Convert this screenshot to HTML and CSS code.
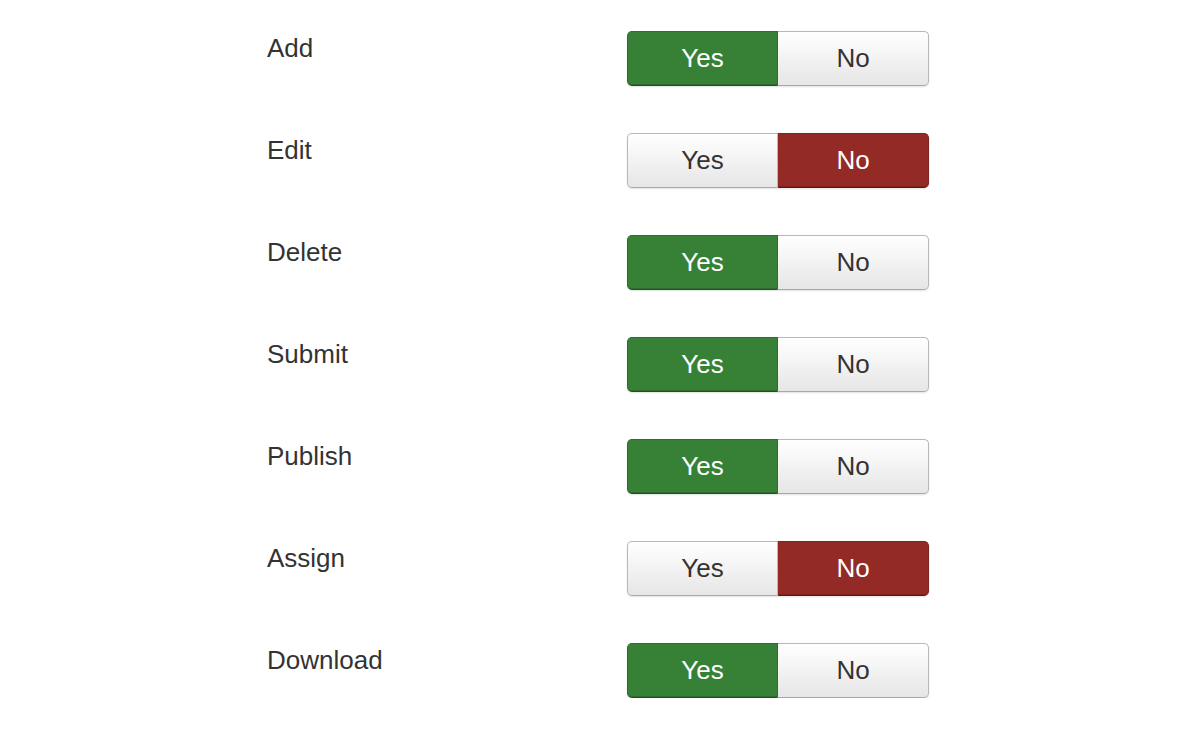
FILE: index.html
```html
<!DOCTYPE html>
<html lang="en">

<head>
    <meta charset="UTF-8">
    <meta name="viewport" content="width=device-width, initial-scale=1.0">
    <title>Permissions</title>
    <link rel="stylesheet" href="styles.css">
</head>

<body>
    <div class="options">
        <div class="option-row">
            <label class="option-label">Add</label>
            <div class="btn-group">
                <button class="btn active-yes">Yes</button>
                <button class="btn">No</button>
            </div>
        </div>
        <div class="option-row">
            <label class="option-label">Edit</label>
            <div class="btn-group">
                <button class="btn">Yes</button>
                <button class="btn active-no">No</button>
            </div>
        </div>
        <div class="option-row">
            <label class="option-label">Delete</label>
            <div class="btn-group">
                <button class="btn active-yes">Yes</button>
                <button class="btn">No</button>
            </div>
        </div>
        <div class="option-row">
            <label class="option-label">Submit</label>
            <div class="btn-group">
                <button class="btn active-yes">Yes</button>
                <button class="btn">No</button>
            </div>
        </div>
        <div class="option-row">
            <label class="option-label">Publish</label>
            <div class="btn-group">
                <button class="btn active-yes">Yes</button>
                <button class="btn">No</button>
            </div>
        </div>
        <div class="option-row">
            <label class="option-label">Assign</label>
            <div class="btn-group">
                <button class="btn">Yes</button>
                <button class="btn active-no">No</button>
            </div>
        </div>
        <div class="option-row">
            <label class="option-label">Download</label>
            <div class="btn-group">
                <button class="btn active-yes">Yes</button>
                <button class="btn">No</button>
            </div>
        </div>
    </div>
</body>

</html>
```

FILE: styles.css
```css
body {
    margin: 0;
    background-color: #fff;
    font-family: "Liberation Sans", Arial, sans-serif;
    color: #333;
}

.options {
    padding: 31px 0 0 267px;
    display: flex;
    flex-direction: column;
    gap: 47px;
}

.option-row {
    display: flex;
    align-items: flex-start;
}

.option-label {
    width: 360px;
    font-size: 26px;
    line-height: 34px;
}

.btn-group {
    display: flex;
    border-radius: 5px;
    box-shadow: 0 1px 2px rgba(0, 0, 0, 0.12);
}

.btn {
    width: 151px;
    height: 55px;
    font-family: inherit;
    font-size: 26px;
    color: #333;
    background: linear-gradient(to bottom, #ffffff, #e6e6e6);
    border: 1px solid #b8b8b8;
    border-bottom-color: #a8a8a8;
    box-shadow: inset 0 1px 0 rgba(255, 255, 255, 0.3);
    padding: 0;
    cursor: pointer;
}

.btn:first-child {
    border-radius: 5px 0 0 5px;
}

.btn:last-child {
    border-radius: 0 5px 5px 0;
    border-left: none;
}

.btn.active-yes {
    color: #fff;
    background: #378137;
    border-color: #2d6e2d;
    border-bottom-color: #1f4f1f;
    box-shadow: inset 0 -1px 0 rgba(0, 0, 0, 0.15);
}

.btn.active-no {
    color: #fff;
    background: #942a25;
    border-color: #7e231f;
    border-bottom-color: #5a1815;
    box-shadow: inset 0 -1px 0 rgba(0, 0, 0, 0.15);
}
```
